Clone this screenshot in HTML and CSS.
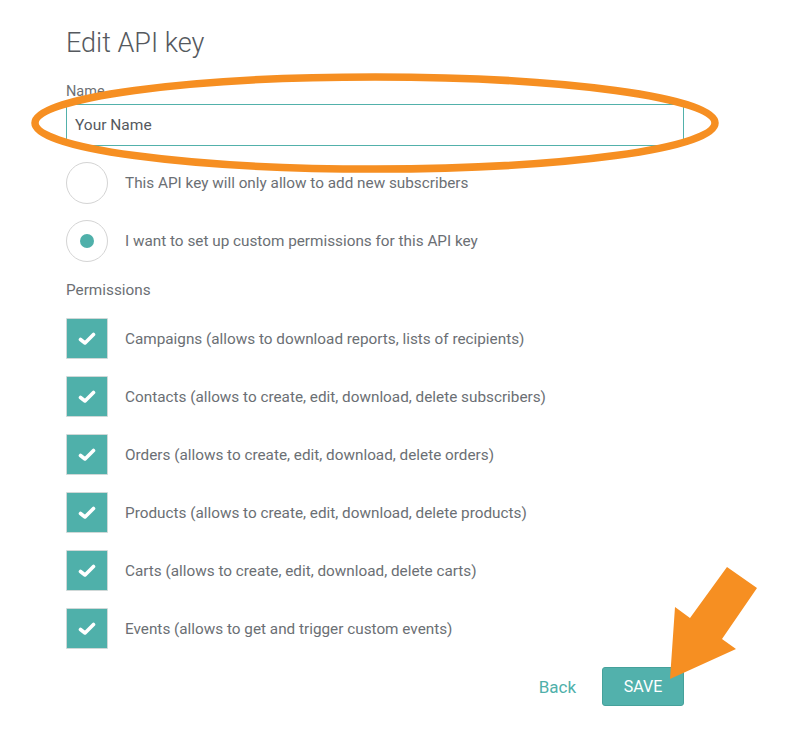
FILE: index.html
```html
<!DOCTYPE html>
<html>
<head>
<meta charset="utf-8">
<link rel="stylesheet" href="styles.css">
</head>
<body>
<div class="page">
  <h1 class="title">Edit API key</h1>
  <label class="field-label">Name</label>
  <div class="input">Your Name</div>

  <div class="radio-row">
    <span class="radio"></span>
    <span class="opt-text">This API key will only allow to add new subscribers</span>
  </div>
  <div class="radio-row">
    <span class="radio checked"><span class="dot"></span></span>
    <span class="opt-text">I want to set up custom permissions for this API key</span>
  </div>

  <div class="section-label">Permissions</div>

  <div class="perm-list">
    <div class="perm-row"><span class="check"><svg width="18" height="14" viewBox="0 0 18 14"><path d="M2.5 7.5 L7 11 L15.5 2.5" fill="none" stroke="#fff" stroke-width="3.6" stroke-linecap="round" stroke-linejoin="round"/></svg></span><span class="opt-text">Campaigns (allows to download reports, lists of recipients)</span></div>
    <div class="perm-row"><span class="check"><svg width="18" height="14" viewBox="0 0 18 14"><path d="M2.5 7.5 L7 11 L15.5 2.5" fill="none" stroke="#fff" stroke-width="3.6" stroke-linecap="round" stroke-linejoin="round"/></svg></span><span class="opt-text">Contacts (allows to create, edit, download, delete subscribers)</span></div>
    <div class="perm-row"><span class="check"><svg width="18" height="14" viewBox="0 0 18 14"><path d="M2.5 7.5 L7 11 L15.5 2.5" fill="none" stroke="#fff" stroke-width="3.6" stroke-linecap="round" stroke-linejoin="round"/></svg></span><span class="opt-text">Orders (allows to create, edit, download, delete orders)</span></div>
    <div class="perm-row"><span class="check"><svg width="18" height="14" viewBox="0 0 18 14"><path d="M2.5 7.5 L7 11 L15.5 2.5" fill="none" stroke="#fff" stroke-width="3.6" stroke-linecap="round" stroke-linejoin="round"/></svg></span><span class="opt-text">Products (allows to create, edit, download, delete products)</span></div>
    <div class="perm-row"><span class="check"><svg width="18" height="14" viewBox="0 0 18 14"><path d="M2.5 7.5 L7 11 L15.5 2.5" fill="none" stroke="#fff" stroke-width="3.6" stroke-linecap="round" stroke-linejoin="round"/></svg></span><span class="opt-text">Carts (allows to create, edit, download, delete carts)</span></div>
    <div class="perm-row"><span class="check"><svg width="18" height="14" viewBox="0 0 18 14"><path d="M2.5 7.5 L7 11 L15.5 2.5" fill="none" stroke="#fff" stroke-width="3.6" stroke-linecap="round" stroke-linejoin="round"/></svg></span><span class="opt-text">Events (allows to get and trigger custom events)</span></div>
  </div>

  <div class="actions">
    <span class="back">Back</span>
    <span class="save">SAVE</span>
  </div>
</div>

<svg class="annot" width="800" height="755" viewBox="0 0 800 755">
  <ellipse cx="375" cy="123" rx="340" ry="46" fill="none" stroke="#f68f22" stroke-width="7.5"/>
  <polygon points="670,679 675,607 690,618 727,567 757,588 722,639 736,649" fill="#f68f22"/>
</svg>
</body>
</html>
```
FILE: styles.css
```css
html, body {
  margin: 0;
  padding: 0;
  background: #ffffff;
}
body {
  font-family: Roboto, "Liberation Sans", sans-serif;
  color: #6b6f74;
  position: relative;
  width: 800px;
  height: 755px;
  overflow: hidden;
}
.page {
  padding: 27px 0 0 66px;
  width: 618px;
}
.title {
  margin: 0;
  font-size: 27px;
  font-weight: 300;
  color: #55595e;
  line-height: 32px;
  height: 56px;
}
.field-label {
  display: block;
  font-size: 14.5px;
  line-height: 18px;
  color: #6b6f74;
}
.input {
  box-sizing: border-box;
  height: 42px;
  margin-top: 3px;
  border: 1px solid #52b1ab;
  padding: 0 8px;
  font-size: 15.5px;
  line-height: 40px;
  color: #55595e;
}
.radio-row {
  display: flex;
  align-items: center;
  gap: 17px;
  margin-top: 16px;
  height: 42px;
}
.radio-row + .radio-row {
  margin-top: 16px;
}
.radio {
  box-sizing: border-box;
  width: 42px;
  height: 42px;
  border: 1.5px solid #d4d4d4;
  border-radius: 50%;
  display: flex;
  align-items: center;
  justify-content: center;
  flex: none;
}
.dot {
  width: 14px;
  height: 14px;
  border-radius: 50%;
  background: #4fb0aa;
}
.opt-text {
  font-size: 15.3px;
  color: #6b6f74;
}
.section-label {
  font-size: 15.3px;
  color: #6b6f74;
  line-height: 20px;
  margin-top: 18px;
}
.perm-list {
  display: flex;
  flex-direction: column;
  gap: 17px;
  margin-top: 18px;
}
.perm-row {
  display: flex;
  align-items: center;
  gap: 17px;
  height: 41px;
}
.check {
  box-sizing: border-box;
  width: 42px;
  height: 41px;
  background: #4fb0aa;
  border: 1px solid #cfd8d7;
  border-radius: 1px;
  display: flex;
  align-items: center;
  justify-content: center;
  flex: none;
}
.actions {
  display: flex;
  justify-content: flex-end;
  align-items: center;
  gap: 26px;
  margin-top: 18px;
}
.back {
  font-size: 17px;
  color: #4fb0aa;
}
.save {
  box-sizing: border-box;
  width: 82px;
  height: 39px;
  background: #52b1ac;
  border: 1px solid #45a19b;
  border-radius: 3px;
  color: #ffffff;
  font-size: 16px;
  font-weight: 400;
  display: flex;
  align-items: center;
  justify-content: center;
}
.annot {
  position: absolute;
  left: 0;
  top: 0;
  pointer-events: none;
}
```
